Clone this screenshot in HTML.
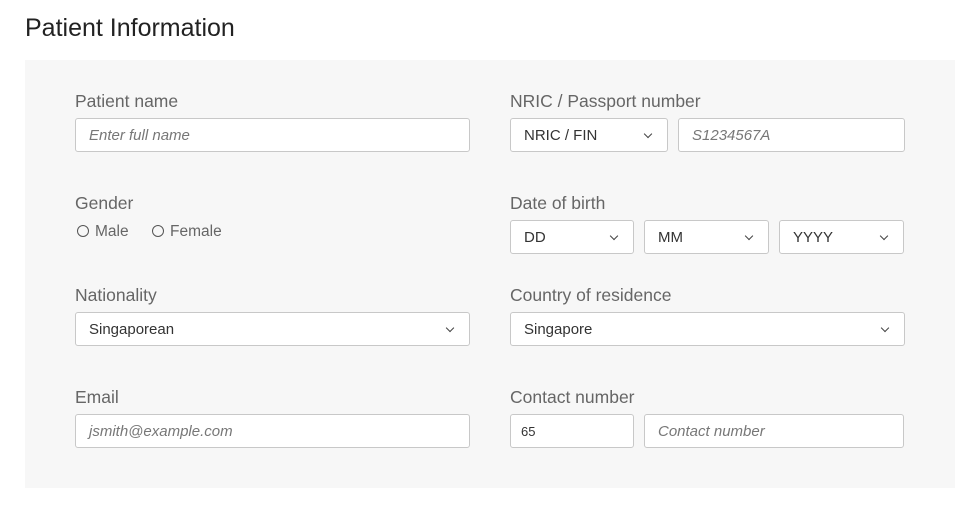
<!DOCTYPE html>
<html><head><style>
*{box-sizing:border-box;margin:0;padding:0}
body{width:977px;height:505px;background:#fff;font-family:"Liberation Sans",sans-serif;position:relative;overflow:hidden}
.a{position:absolute}
h1{position:absolute;left:25px;top:14px;font-size:25px;font-weight:normal;color:#222}
.panel{left:25px;top:60px;width:930px;height:428px;background:#f7f7f7}
.lbl{font-size:17.5px;color:#666}
.box{height:34px;background:#fff;border:1px solid #c8c8c8;border-radius:3px;font-size:15px;color:#333;padding-left:13px;line-height:34px}
.ph{font-style:italic;color:#777}
.sel::after{content:"";position:absolute;right:16px;top:12px;width:5px;height:5px;border-right:1.3px solid #444;border-bottom:1.3px solid #444;transform:rotate(45deg)}
.r{font-size:15.5px;color:#666}
.r span{display:inline-block;width:12px;height:12px;border:1px solid #555;border-radius:50%;vertical-align:-1px;margin-right:6px}
</style></head><body>
<h1>Patient Information</h1>
<div class="a panel"></div>

<div class="a lbl" style="left:75px;top:91px">Patient name</div>
<div class="a box ph" style="left:75px;top:118px;width:395px">Enter full name</div>
<div class="a lbl" style="left:510px;top:91px">NRIC / Passport number</div>
<div class="a box sel" style="left:510px;top:118px;width:158px">NRIC / FIN</div>
<div class="a box ph" style="left:678px;top:118px;width:227px">S1234567A</div>

<div class="a lbl" style="left:75px;top:193px">Gender</div>
<div class="a r" style="left:77px;top:223px"><span></span>Male</div>
<div class="a r" style="left:152px;top:223px"><span></span>Female</div>
<div class="a lbl" style="left:510px;top:193px">Date of birth</div>
<div class="a box sel" style="left:510px;top:220px;width:124px">DD</div>
<div class="a box sel" style="left:644px;top:220px;width:125px">MM</div>
<div class="a box sel" style="left:779px;top:220px;width:125px">YYYY</div>

<div class="a lbl" style="left:75px;top:285px">Nationality</div>
<div class="a box sel" style="left:75px;top:312px;width:395px">Singaporean</div>
<div class="a lbl" style="left:510px;top:285px">Country of residence</div>
<div class="a box sel" style="left:510px;top:312px;width:395px">Singapore</div>

<div class="a lbl" style="left:75px;top:387px">Email</div>
<div class="a box ph" style="left:75px;top:414px;width:395px">jsmith@example.com</div>
<div class="a lbl" style="left:510px;top:387px">Contact number</div>
<div class="a box" style="left:510px;top:414px;width:124px;font-size:13px;padding-left:10px">65</div>
<div class="a box ph" style="left:644px;top:414px;width:260px">Contact number</div>
</body></html>
